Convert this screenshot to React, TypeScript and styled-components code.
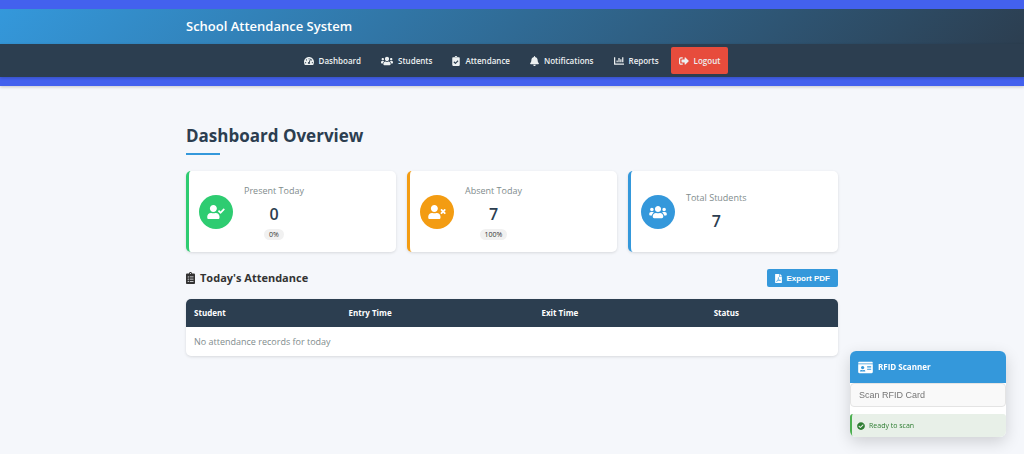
import React from "react";
import styled, { createGlobalStyle } from "styled-components";
import {
  FaBell,
  FaChartBar,
  FaCheckCircle,
  FaClipboardCheck,
  FaClipboardList,
  FaFilePdf,
  FaIdCard,
  FaSignOutAlt,
  FaTachometerAlt,
  FaUserCheck,
  FaUsers,
  FaUserTimes,
} from "react-icons/fa";

const colors = {
  primary: "#3498db",
  dark: "#2c3e50",
  frame: "#4361ee",
  success: "#2ecc71",
  warning: "#f39c12",
  danger: "#e74c3c",
  muted: "#7f8c8d",
  page: "#f5f7fb",
};

const GlobalStyle = createGlobalStyle`
  *, *::before, *::after { box-sizing: border-box; }
  body {
    margin: 0;
    background: ${colors.page};
    color: #333;
    font-family: "Segoe UI", "Open Sans", "Noto Sans", sans-serif;
    font-size: 9px;
    line-height: 14px;
  }
  h1, h2, h3, p, ul { margin: 0; padding: 0; }
  svg { flex: none; }
`;

const Container = styled.div`
  width: 100%;
  max-width: 652px;
  margin: 0 auto;
`;

const Header = styled.header`
  padding: 9px 0;
  background: ${colors.frame};
  box-shadow: 0 1px 3px rgba(0, 0, 0, 0.2);
`;

const Brand = styled.div`
  padding: 7px 0;
  background: linear-gradient(135deg, ${colors.primary}, ${colors.dark});
`;

const BrandTitle = styled.h1`
  color: #fff;
  font-size: 13px;
  font-weight: 600;
  line-height: 21px;
`;

const Nav = styled.nav`
  padding: 3px 0;
  background: ${colors.dark};
  box-shadow: 0 1px 3px rgba(0, 0, 0, 0.2);
`;

const NavList = styled.ul`
  display: flex;
  justify-content: center;
  gap: 4px;
  list-style: none;
`;

const NavLink = styled.a<{ $iconWidth: number; $danger?: boolean }>`
  display: flex;
  align-items: center;
  gap: 5px;
  height: 27px;
  padding: 0 8px;
  border-radius: 2px;
  background: ${(p) => (p.$danger ? colors.danger : "transparent")};
  color: #ecf0f1;
  font-size: 8px;
  font-weight: 600;
  text-decoration: none;

  svg {
    width: ${(p) => p.$iconWidth}px;
    height: 10px;
  }
`;

const Main = styled.main`
  padding: 38px 0 16px;
`;

const PageTitle = styled.h2`
  margin-bottom: 16px;
  color: ${colors.dark};
  font-size: 17px;
  font-weight: 700;
  line-height: 24px;

  &::after {
    content: "";
    display: block;
    width: 34px;
    height: 2px;
    margin-top: 5px;
    background: ${colors.primary};
  }
`;

const Stats = styled.section`
  display: grid;
  grid-template-columns: repeat(3, 1fr);
  gap: 11px;
`;

const StatCard = styled.article<{ $color: string }>`
  display: flex;
  align-items: center;
  gap: 11px;
  min-height: 81px;
  padding: 11px 10px;
  border-left: 3px solid ${(p) => p.$color};
  border-radius: 5px;
  background: #fff;
  box-shadow: 0 1px 3px rgba(0, 0, 0, 0.12);
`;

const StatIcon = styled.span<{ $color: string }>`
  display: flex;
  align-items: center;
  justify-content: center;
  width: 34px;
  height: 34px;
  border-radius: 50%;
  background: ${(p) => p.$color};
  color: #fff;

  svg {
    width: 18px;
    height: 14px;
  }
`;

const StatBody = styled.div`
  display: flex;
  flex-direction: column;
  align-items: center;
`;

const StatLabel = styled.h3`
  color: ${colors.muted};
  font-size: 9px;
  font-weight: 500;
  line-height: 14px;
`;

const StatValue = styled.p`
  margin-top: 4px;
  color: ${colors.dark};
  font-size: 16px;
  font-weight: 600;
  line-height: 24px;
`;

const StatBadge = styled.span`
  margin-top: 3px;
  padding: 0 5px;
  border-radius: 6px;
  background: #f1f1f1;
  font-size: 7px;
  line-height: 11px;
`;

const SectionHead = styled.div`
  display: flex;
  align-items: center;
  justify-content: space-between;
  margin: 17px 0 12px;
`;

const SectionTitle = styled.h3`
  display: flex;
  align-items: center;
  gap: 5px;
  font-size: 11px;
  font-weight: 700;
  line-height: 18px;

  svg {
    width: 9px;
    height: 12px;
  }
`;

const ExportButton = styled.button`
  display: flex;
  align-items: center;
  gap: 4px;
  height: 18px;
  padding: 0 8px;
  border: 0;
  border-radius: 2px;
  background: ${colors.primary};
  color: #fff;
  font-family: "Liberation Sans", Arial, sans-serif;
  font-size: 8px;
  font-weight: 700;

  svg {
    width: 7px;
    height: 9px;
  }
`;

const TableCard = styled.div`
  overflow: hidden;
  border-radius: 5px;
  background: #fff;
  box-shadow: 0 1px 3px rgba(0, 0, 0, 0.12);
`;

const Table = styled.table`
  width: 100%;
  border-collapse: collapse;
  table-layout: fixed;
`;

const HeadCell = styled.th<{ $width: string }>`
  width: ${(p) => p.$width};
  height: 28px;
  padding: 0 8px;
  background: ${colors.dark};
  color: #fff;
  font-size: 8px;
  font-weight: 700;
  text-align: left;
`;

const EmptyCell = styled.td`
  height: 29px;
  padding: 0 8px;
  color: ${colors.muted};
`;

const Scanner = styled.aside`
  position: fixed;
  right: 18px;
  bottom: 17px;
  width: 156px;
  overflow: hidden;
  border-radius: 6px;
  background: #fff;
  box-shadow: 0 5px 16px rgba(0, 0, 0, 0.16);
`;

const ScannerHead = styled.h3`
  display: flex;
  align-items: center;
  gap: 5px;
  height: 32px;
  padding: 0 8px;
  background: ${colors.primary};
  color: #fff;
  font-size: 8px;
  font-weight: 700;

  svg {
    width: 15px;
    height: 13px;
  }
`;

const ScanInput = styled.input`
  display: block;
  width: 100%;
  height: 24px;
  padding: 0 8px;
  border: 1px solid #e4e4e4;
  border-radius: 4px;
  background: #f9f9f9;
  font-family: "Liberation Sans", Arial, sans-serif;
  font-size: 9px;

  &::placeholder { color: #757575; }
`;

const ScanStatus = styled.p`
  display: flex;
  align-items: center;
  gap: 4px;
  height: 23px;
  margin-top: 7px;
  padding: 0 5px;
  border-left: 2px solid #4caf50;
  border-radius: 3px;
  background: #e8f0e8;
  color: #2e7d32;
  font-size: 7px;

  svg {
    width: 8px;
    height: 8px;
  }
`;

const navItems = [
  { label: "Dashboard", icon: <FaTachometerAlt />, iconWidth: 10 },
  { label: "Students", icon: <FaUsers />, iconWidth: 12 },
  { label: "Attendance", icon: <FaClipboardCheck />, iconWidth: 8 },
  { label: "Notifications", icon: <FaBell />, iconWidth: 9 },
  { label: "Reports", icon: <FaChartBar />, iconWidth: 10 },
  { label: "Logout", icon: <FaSignOutAlt />, iconWidth: 10, danger: true },
];

const stats = [
  { label: "Present Today", value: 0, badge: "0%", color: colors.success, icon: <FaUserCheck /> },
  { label: "Absent Today", value: 7, badge: "100%", color: colors.warning, icon: <FaUserTimes /> },
  { label: "Total Students", value: 7, color: colors.primary, icon: <FaUsers /> },
];

const columns = [
  { label: "Student", width: "23.7%" },
  { label: "Entry Time", width: "29.6%" },
  { label: "Exit Time", width: "26.4%" },
  { label: "Status", width: "20.3%" },
];

export default function App() {
  return (
    <>
      <GlobalStyle />
      <Header>
        <Brand>
          <Container>
            <BrandTitle>School Attendance System</BrandTitle>
          </Container>
        </Brand>
        <Nav>
          <NavList>
            {navItems.map((item) => (
              <li key={item.label}>
                <NavLink href="#" $iconWidth={item.iconWidth} $danger={item.danger}>
                  {item.icon}
                  {item.label}
                </NavLink>
              </li>
            ))}
          </NavList>
        </Nav>
      </Header>

      <Main>
        <Container>
          <PageTitle>Dashboard Overview</PageTitle>
          <Stats>
            {stats.map((stat) => (
              <StatCard key={stat.label} $color={stat.color}>
                <StatIcon $color={stat.color}>{stat.icon}</StatIcon>
                <StatBody>
                  <StatLabel>{stat.label}</StatLabel>
                  <StatValue>{stat.value}</StatValue>
                  {stat.badge && <StatBadge>{stat.badge}</StatBadge>}
                </StatBody>
              </StatCard>
            ))}
          </Stats>

          <SectionHead>
            <SectionTitle>
              <FaClipboardList />
              Today's Attendance
            </SectionTitle>
            <ExportButton type="button">
              <FaFilePdf />
              Export PDF
            </ExportButton>
          </SectionHead>

          <TableCard>
            <Table>
              <thead>
                <tr>
                  {columns.map((column) => (
                    <HeadCell key={column.label} $width={column.width} scope="col">
                      {column.label}
                    </HeadCell>
                  ))}
                </tr>
              </thead>
              <tbody>
                <tr>
                  <EmptyCell colSpan={4}>No attendance records for today</EmptyCell>
                </tr>
              </tbody>
            </Table>
          </TableCard>
        </Container>
      </Main>

      <Scanner>
        <ScannerHead>
          <FaIdCard />
          RFID Scanner
        </ScannerHead>
        <ScanInput type="text" placeholder="Scan RFID Card" aria-label="Scan RFID Card" />
        <ScanStatus role="status">
          <FaCheckCircle />
          Ready to scan
        </ScanStatus>
      </Scanner>
    </>
  );
}
